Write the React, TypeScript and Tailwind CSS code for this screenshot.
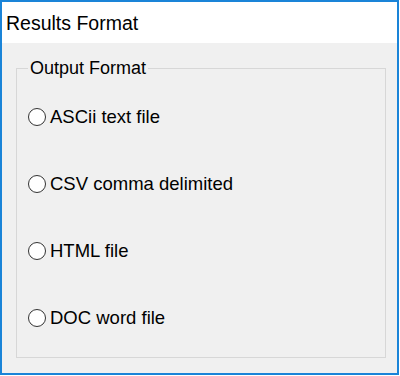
const options = [
  'ASCii text file',
  'CSV comma delimited',
  'HTML file',
  'DOC word file',
];

function Radio({ label }: { label: string }) {
  return (
    <label className="flex items-center h-5 gap-[4px]">
      <span className="w-[18px] h-[18px] rounded-full border-[1.5px] border-[#333333] bg-white shrink-0" />
      <span className="text-[18.5px] leading-5 text-black">{label}</span>
    </label>
  );
}

export default function App() {
  return (
    <div
      className="w-[399px] h-[375px] border-2 border-[#1a84d8] bg-[#f0f0f0] flex flex-col"
      style={{ fontFamily: '"Liberation Sans", Arial, sans-serif' }}
    >
      {/* title strip */}
      <div className="h-[41px] bg-white pl-1 pt-[11px] text-[19.5px] leading-5 text-black">
        Results Format
      </div>

      {/* group box */}
      <div className="pl-[14px] pt-[15px]">
        <fieldset className="w-[370px] h-[300px] border border-[#d7d7d7] pl-[11px]">
          <legend className="px-[2px] text-[18px] leading-5 text-black">
            Output Format
          </legend>
          <div className="flex flex-col gap-[47px] pt-[29px]">
            {options.map((o) => (
              <Radio key={o} label={o} />
            ))}
          </div>
        </fieldset>
      </div>
    </div>
  );
}
